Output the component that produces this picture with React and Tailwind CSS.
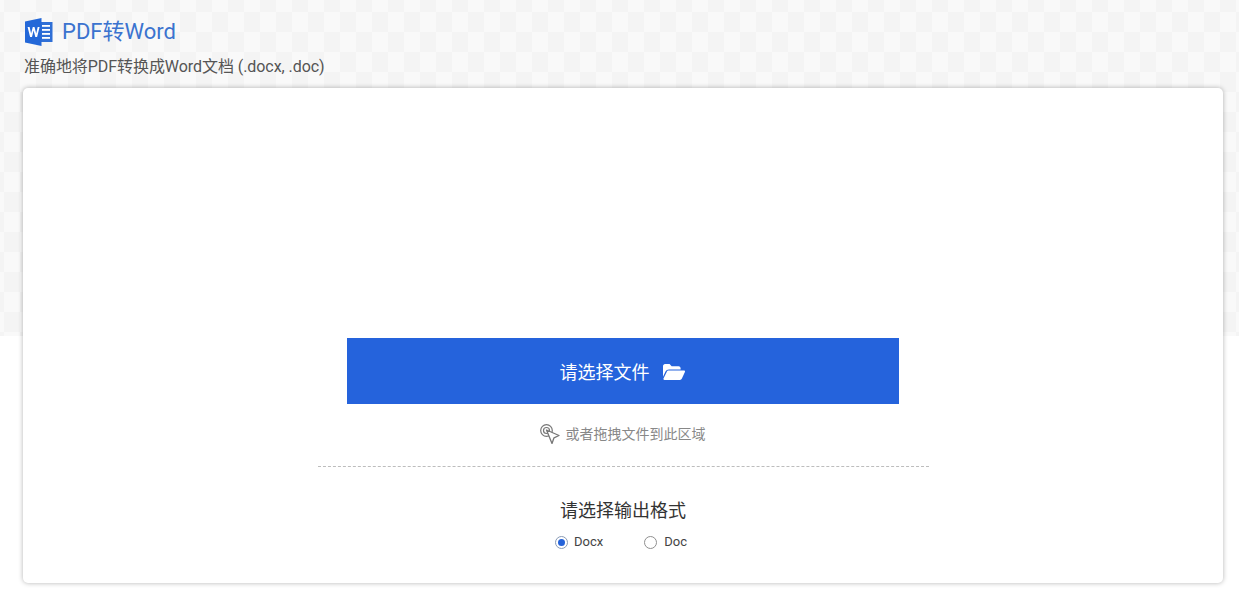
import React from "react";

function WordIcon() {
  return (
    <svg width="28" height="28" viewBox="0 0 28 28" className="block">
      <rect x="13" y="4" width="14.5" height="20" fill="#2f6fd6" />
      <g fill="#fff">
        <rect x="17" y="7" width="8" height="1.8" />
        <rect x="17" y="11" width="8" height="1.8" />
        <rect x="17" y="15" width="8" height="1.8" />
        <rect x="17" y="19" width="8" height="1.8" />
      </g>
      <path d="M0 3.4 L16.5 0 V28 L0 24.6 Z" fill="#2468d8" />
      <path d="M2.6 9h2l1.5 6.6L7.8 9h1.7l1.7 6.6L12.7 9h1.9l-2.5 10h-1.8L8.6 12.6 7 19H5.1Z" fill="#fff" />
    </svg>
  );
}

function FolderOpen() {
  return (
    <svg width="22" height="16" viewBox="0 0 22 16" className="block">
      <path d="M0 2.2C0 1 .9 0 2 0h4.6l2 2.2h7c1.1 0 2 .9 2 2V5.4H6c-1.6 0-2.8.8-3.5 2.2L0 12.8Z" fill="#fff" />
      <path d="M5.6 6.6H21c.8 0 1.2.7.9 1.4l-3 6.6c-.4.9-1.1 1.4-2 1.4H1.4c-.8 0-1.2-.7-.9-1.4l3.2-6.6c.4-.9 1.1-1.4 1.9-1.4Z" fill="#fff" />
    </svg>
  );
}

function DragIcon() {
  return (
    <svg width="20" height="20" viewBox="0 0 20 20" fill="none" stroke="#777" className="block">
      <circle cx="6.5" cy="6.5" r="5.8" strokeWidth="1.2" />
      <circle cx="6.5" cy="6.5" r="3" strokeWidth="1.2" />
      <path d="M6.5 6 L19 11.5 L14 13.8 L12 19.5 Z" fill="#fff" strokeWidth="1.3" strokeLinejoin="round" />
    </svg>
  );
}

function Radio({ checked, label, gap }) {
  return (
    <label className={"flex items-center " + gap}>
      <span className={"flex h-[13px] w-[13px] items-center justify-center rounded-full border bg-white " + (checked ? "border-[#8a9bb5]" : "border-[#8f8f8f]")}>
        {checked && <span className="h-[7px] w-[7px] rounded-full bg-[#2563d9]" />}
      </span>
      <span className="text-[13px] leading-[18px] text-[#444]">{label}</span>
    </label>
  );
}

export default function App() {
  return (
    <div className="relative h-[596px] overflow-hidden bg-white font-['Roboto','Noto_Sans_CJK_SC',sans-serif]">
      <div className="absolute inset-x-0 top-0 h-[336px] bg-[#f7f7f7] bg-[conic-gradient(#f9f9f9_25%,#f4f4f4_0_50%,#f9f9f9_0_75%,#f4f4f4_0)] bg-[length:32px_40px] bg-[position:4px_-8px]" />
      <div className="relative flex flex-col pl-[23px] pr-[16px] pt-[18px]">
        <div className="flex h-[28px] items-center gap-[9px] pl-[2px]">
          <WordIcon />
          <h1 className="text-[22px] leading-[28px] font-normal text-[#3b73cf]">PDF转Word</h1>
        </div>
        <p className="mt-[11px] pl-[1px] text-[16px] leading-[20px] tracking-[-0.06px] text-[#555]">准确地将PDF转换成Word文档 (.docx, .doc)</p>
        <main className="mt-[11px] flex h-[495px] flex-col items-center rounded-[5px] bg-white pt-[250px] shadow-[0_0_5px_rgba(0,0,0,0.3)]">
          <button className="flex h-[66px] w-[552px] items-center justify-center gap-[13px] bg-[#2563dc] pr-[2px] pt-[2px] text-[18px] text-white">
            <span>请选择文件</span>
            <FolderOpen />
          </button>
          <div className="mt-[20px] mr-[1px] flex h-[20px] items-center gap-[6px] text-[14px] text-[#888]">
            <DragIcon />
            <span>或者拖拽文件到此区域</span>
          </div>
          <div className="mt-[22px] ml-[1px] w-[611px] border-t border-dashed border-[#bdbdbd]" />
          <h2 className="mt-[32px] text-[18px] leading-[24px] font-normal text-[#333]">请选择输出格式</h2>
          <div className="mr-[4px] mt-[10px] flex items-center gap-[41px]">
            <Radio checked label="Docx" gap="gap-[6px]" />
            <Radio label="Doc" gap="gap-[7px]" />
          </div>
        </main>
      </div>
    </div>
  );
}
